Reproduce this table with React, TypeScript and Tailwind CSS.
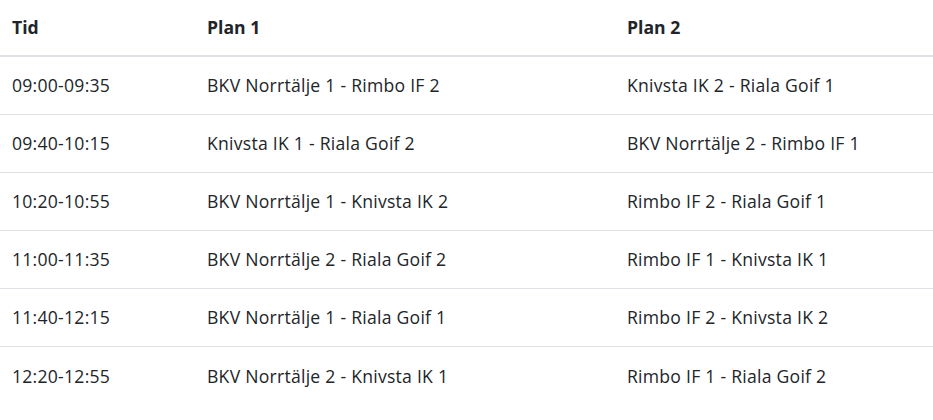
const rows = [
  ["09:00-09:35", "BKV Norrtälje 1 - Rimbo IF 2", "Knivsta IK 2 - Riala Goif 1"],
  ["09:40-10:15", "Knivsta IK 1 - Riala Goif 2", "BKV Norrtälje 2 - Rimbo IF 1"],
  ["10:20-10:55", "BKV Norrtälje 1 - Knivsta IK 2", "Rimbo IF 2 - Riala Goif 1"],
  ["11:00-11:35", "BKV Norrtälje 2 - Riala Goif 2", "Rimbo IF 1 - Knivsta IK 1"],
  ["11:40-12:15", "BKV Norrtälje 1 - Riala Goif 1", "Rimbo IF 2 - Knivsta IK 2"],
  ["12:20-12:55", "BKV Norrtälje 2 - Knivsta IK 1", "Rimbo IF 1 - Riala Goif 2"],
];

export default function App() {
  return (
    <div className="w-[933px] h-[420px] overflow-hidden bg-white font-['Open_Sans',sans-serif] text-[17.6px] tracking-[0.25px] text-[#212529]">
      <div className="grid grid-cols-[195px_420px_1fr] h-[57px] items-center border-b-2 border-[#dee2e6] font-bold tracking-normal">
        <div className="pl-3">Tid</div>
        <div className="pl-3">Plan 1</div>
        <div className="pl-3">Plan 2</div>
      </div>
      {rows.map((r, i) => (
        <div
          key={i}
          className="grid grid-cols-[195px_420px_1fr] h-[58px] items-center border-b border-[#dee2e6] last:border-b-0"
        >
          <div className="pl-3">{r[0]}</div>
          <div className="pl-3">{r[1]}</div>
          <div className="pl-3">{r[2]}</div>
        </div>
      ))}
    </div>
  );
}
